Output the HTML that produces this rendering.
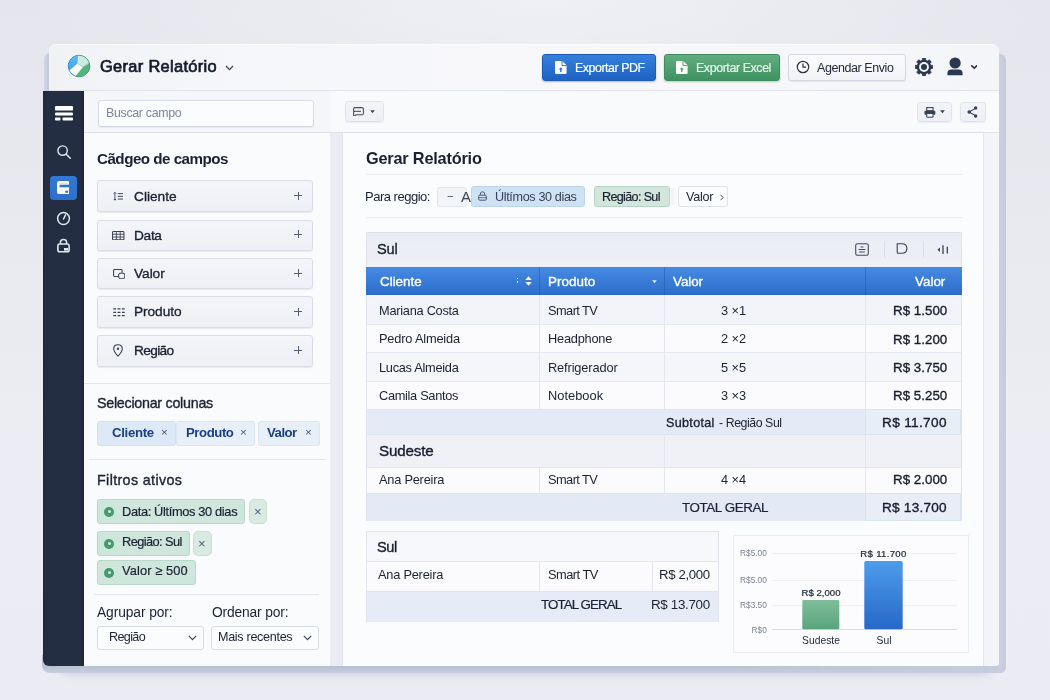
<!DOCTYPE html>
<html lang="pt-BR">
<head>
<meta charset="utf-8">
<title>Gerar Relatório</title>
<style>
*{box-sizing:border-box;margin:0;padding:0}
html,body{width:1050px;height:700px;overflow:hidden}
body{font-family:"Liberation Sans",sans-serif;color:#1b2233;background:radial-gradient(ellipse 520px 120px at 52% 0%,rgba(240,241,245,.9),rgba(240,241,245,0)),linear-gradient(180deg,#e5e6ed 0%,#e8e9ef 28%,#ecedf3 62%,#ebecf3 100%);position:relative}
.abs{position:absolute}
.t{position:absolute;white-space:nowrap;line-height:1;will-change:transform}
#shadow{left:60px;top:600px;width:930px;height:68px;background:#c7cddc;border-radius:8px;box-shadow:0 6px 9px rgba(150,160,195,.42)}
#shl{left:43.500px;top:52.500px;width:12px;height:45px;border-radius:6px 0 0 0;background:linear-gradient(90deg,#d3d8e4,#bcc4d6 6px)}
#shr{left:996px;top:53.500px;width:9.600px;height:619.700px;border-radius:0 6px 6px 0;background:linear-gradient(90deg,#c6ccdc 2px,#cbd0df 4px,#c5cbdb)}
#shb{left:41.500px;top:655px;width:960px;height:18.200px;border-radius:0 0 0 8px;background:linear-gradient(90deg,rgba(197,203,219,0) 70%,rgba(198,204,220,1) 99%),linear-gradient(180deg,#b7bfd4 11px,#c8cedd 18px)}
#hdr{left:49px;top:43.500px;width:950px;height:47.500px;background:linear-gradient(90deg,#f1f2f6 0,#f6f7fa 22%,#f8f8fb 55%,#f4f5f8 100%);border-radius:7px 8px 0 0;border-bottom:1px solid #dfe2ea;box-shadow:inset 0 1px 0 #fafbfd}
#side{left:43.300px;top:90.500px;width:40.500px;height:575.500px;background:linear-gradient(90deg,#1d283a,#232e42 3px,#232e42 37px,#1c2739);border-radius:0 0 0 6px}
#lp{left:83.500px;top:91px;width:247.500px;height:575px;background:#fafbfd;border-right:1px solid #eceef4}
#lptb{left:83.500px;top:91px;width:247.500px;height:42px;background:#f5f6fa;border-bottom:1px solid #dde0e8}
#main{left:331px;top:91px;width:668px;height:575px;border-radius:0 0 3px 0;background:linear-gradient(90deg,#e3e5ee 0,#ecedf4 1px,#ecedf4 10.5px,#e1e4ed 11.5px,#f3f4f8 653px,#f4f5f9 668px)}
#maintb{left:331px;top:91px;width:668px;height:42px;background:#f9fafc;border-bottom:1px solid #dde0e8}
#card{left:342.500px;top:133px;width:641.500px;height:533px;background:#fbfcfe;border-right:1px solid #e6e8ef}
.btn{position:absolute;border-radius:3px}
.field{position:absolute;left:96.500px;width:216.500px;height:32px;background:linear-gradient(180deg,#f4f5f9,#eef0f5);border:1px solid #dadde6;border-radius:3px;box-shadow:0 1px 1px rgba(120,130,160,.14)}
.pl{position:absolute;left:294px;width:8px;height:8px}
.pl:before{content:"";position:absolute;left:0;top:3.500px;width:8px;height:1.100px;background:#566074}
.pl:after{content:"";position:absolute;left:3.500px;top:0;width:1.100px;height:8px;background:#566074}
.hl{position:absolute;height:1px;background:#e3e6ed}
.chipb{position:absolute;height:25px;top:421px;background:#e8eff9;border:1px solid #dbe5f3;border-radius:3px}
.chipg{position:absolute;left:96.500px;height:25px;background:#cfe6dc;border:1px solid #b9d8ca;border-radius:3px}
.dot{position:absolute;width:10px;height:10px;border-radius:50%;background:#429b6a;margin:.3px 0 0 .3px}
.dot:after{content:"";position:absolute;left:3.300px;top:3.300px;width:3.400px;height:3.400px;border-radius:50%;background:#dff0e7}
.xb{position:absolute;width:18.500px;height:25px;background:#d8eae1;border:1px solid #c9dfd2;border-radius:5px}
.sel{position:absolute;top:625.500px;height:24.500px;background:#fbfcfe;border:1px solid #d9dce5;border-radius:3px}
.sbtn{position:absolute;top:101.500px;height:20.500px;background:linear-gradient(180deg,#f3f4f8,#eff0f5);border:1px solid #dfe2ea;border-radius:3.500px;box-shadow:0 1px 1px rgba(120,130,160,.10)}
.cell{position:absolute}
</style>
</head>
<body>
<div id="shadow" class="abs"></div>
<div id="shl" class="abs"></div>
<div id="shb" class="abs"></div>
<div id="shr" class="abs"></div>
<div id="hdr" class="abs"></div>
<div id="side" class="abs"></div>
<div id="lp" class="abs"></div>
<div id="lptb" class="abs"></div>
<div id="main" class="abs"></div>
<div id="maintb" class="abs"></div>
<div id="card" class="abs"></div>
<!-- header -->
<svg class="abs" style="left:66.800px;top:54px" width="24" height="24" viewBox="0 0 25 25">
<defs><linearGradient id="lgb" x1="0" y1="0" x2="0" y2="1"><stop offset="0" stop-color="#5cc0f8"/><stop offset="1" stop-color="#3f9fe6"/></linearGradient></defs>
<circle cx="12.5" cy="12.5" r="12.400" fill="#f8f9fc"/>
<path d="M12.11 1.31 L11.40 9.90 L2.46 17.46 A 11.2 11.2 0 0 1 12.11 1.31 Z" fill="url(#lgb)"/>
<path d="M12.11 1.31 A 11.2 11.2 0 0 1 23.27 9.41 L16.30 13.50 L11.40 9.90 Z" fill="#cdeae1"/>
<path d="M23.27 9.41 A 11.2 11.2 0 0 1 8.49 22.96 L16.30 13.50 Z" fill="#56b57f"/>
<path d="M8.49 22.96 A 11.2 11.2 0 0 1 2.46 17.46 L11.40 9.90 L16.30 13.50 Z" fill="#fcfefd"/>
<path d="M12.11 1.31 L11.40 9.90 L16.30 13.50 L23.27 9.41 M11.40 9.90 L2.46 17.46 M16.30 13.50 L8.49 22.96" fill="none" stroke="#f2fbf7" stroke-width="0.700" stroke-opacity=".9"/>
<path d="M11.40 9.90 L16.30 13.50 L23.27 9.41" fill="none" stroke="#3f9a78" stroke-width="0.600" stroke-opacity=".7"/>
<path d="M8.49 22.96 A 11.2 11.2 0 0 1 2.46 17.46 A 11.2 11.2 0 0 1 12.11 1.31" fill="none" stroke="#2f80cc" stroke-width="0.900"/>
<path d="M12.11 1.31 A 11.2 11.2 0 0 1 23.27 9.41 A 11.2 11.2 0 0 1 8.49 22.96" fill="none" stroke="#2f9467" stroke-width="0.900"/>
</svg>
<div class="t" style="left:100.0px;top:58.0px;font-size:16.4px;-webkit-text-stroke:.7px currentColor;color:#141b2d;letter-spacing:0.33px;">Gerar Relatório</div>
<svg class="abs" style="left:224.500px;top:64.500px" width="9" height="6" viewBox="0 0 9 6"><path d="M1 1 L4.500 4.600 L8 1" fill="none" stroke="#3b4356" stroke-width="1.300"/></svg>

<div class="btn" style="left:541.500px;top:53.500px;width:114.500px;height:27.500px;background:linear-gradient(180deg,#3580dc,#1f62c2);border:1px solid #1d5cb8;box-shadow:0 1px 2px rgba(40,70,130,.35)"></div>
<svg class="abs" style="left:555px;top:61px" width="12" height="13" viewBox="0 0 12 13"><path d="M1.200 0 H7.200 L11.600 4.200 V11.800 Q11.600 13 10.400 13 H1.200 Q0 13 0 11.800 V1.200 Q0 0 1.200 0 Z" fill="#fff"/><path d="M7 0 V4.600 H11.600" fill="none" stroke="#2a70cf" stroke-width="1"/><path d="M5.800 6.200 L7.800 8.600 H6.500 V11 H5.100 V8.600 H3.800 Z" fill="#2a70cf"/></svg>
<div class="t" style="left:575.3px;top:62.0px;font-size:12.4px;-webkit-text-stroke:.2px currentColor;color:#ffffff;letter-spacing:-0.45px;">Exportar PDF</div>

<div class="btn" style="left:663.500px;top:54px;width:116px;height:27px;background:linear-gradient(180deg,#62ad7f,#3f9262);border:1px solid #3d8d5e;box-shadow:0 1px 2px rgba(40,100,70,.3)"></div>
<svg class="abs" style="left:676px;top:61px" width="12" height="13" viewBox="0 0 12 13"><path d="M1.200 0 H7.200 L11.600 4.200 V11.800 Q11.600 13 10.400 13 H1.200 Q0 13 0 11.800 V1.200 Q0 0 1.200 0 Z" fill="#fff"/><path d="M7 0 V4.600 H11.600" fill="none" stroke="#4a9f6e" stroke-width="1"/><path d="M5.800 6.200 L7.800 8.600 H6.500 V11 H5.100 V8.600 H3.800 Z" fill="#4a9f6e"/></svg>
<div class="t" style="left:696.0px;top:62.0px;font-size:12.4px;-webkit-text-stroke:.2px currentColor;color:#e6f4ec;letter-spacing:-0.40px;">Exportar Excel</div>

<div class="btn" style="left:787.500px;top:54px;width:118px;height:26.500px;background:linear-gradient(180deg,#fbfbfd,#f2f3f7);border:1px solid #d5d8e1;box-shadow:0 1px 1px rgba(120,130,160,.15)"></div>
<svg class="abs" style="left:796px;top:60.400px" width="14" height="14" viewBox="0 0 14 14"><circle cx="7" cy="7" r="5.700" fill="none" stroke="#2a3245" stroke-width="1.200"/><path d="M7 3.600 V7.200 H10" fill="none" stroke="#2a3245" stroke-width="1.200"/></svg>
<div class="t" style="left:816.7px;top:62.0px;font-size:12.5px;color:#222a3c;letter-spacing:-0.43px;">Agendar Envio</div>

<svg class="abs" style="left:915.200px;top:57.600px" width="18" height="18" viewBox="0 0 18 18"><path d="M7.27 2.32 L7.53 0.22 L10.47 0.22 L10.73 2.32 L12.50 3.05 L14.17 1.75 L16.25 3.83 L14.95 5.50 L15.68 7.27 L17.78 7.53 L17.78 10.47 L15.68 10.73 L14.95 12.50 L16.25 14.17 L14.17 16.25 L12.50 14.95 L10.73 15.68 L10.47 17.78 L7.53 17.78 L7.27 15.68 L5.50 14.95 L3.83 16.25 L1.75 14.17 L3.05 12.50 L2.32 10.73 L0.22 10.47 L0.22 7.53 L2.32 7.27 L3.05 5.50 L1.75 3.83 L3.83 1.75 L5.50 3.05 Z" fill="#2b3650" stroke="#2b3650" stroke-width="0.800" stroke-linejoin="round"/><circle cx="9" cy="9" r="4.900" fill="#f4f5f9"/><circle cx="9" cy="9" r="3" fill="#2b3650"/></svg>
<svg class="abs" style="left:946.800px;top:57px" width="16" height="18.500" viewBox="0 0 16 18.500"><circle cx="8.100" cy="6" r="5.600" fill="#2b3650"/><path d="M0.400 18.200 V16.600 Q0.400 12.500 4.400 12.500 H11.600 Q15.600 12.500 15.600 16.600 V18.200 Z" fill="#2b3650"/></svg>
<svg class="abs" style="left:970.700px;top:65px" width="6.500" height="4.500" viewBox="0 0 7.200 5"><path d="M0.900 1 L3.600 3.600 L6.300 1" fill="none" stroke="#2b3650" stroke-width="1.900" stroke-linecap="round" stroke-linejoin="round"/></svg>
<!-- sidebar icons -->
<svg class="abs" style="left:54.500px;top:105.500px" width="18" height="15" viewBox="0 0 18 15"><rect x="0" y="0" width="18" height="4.600" rx="1.200" fill="#fff"/><rect x="0" y="6.600" width="18" height="3" rx="1" fill="#fff"/><rect x="0" y="11.600" width="5.500" height="3" rx="1" fill="#fff"/><rect x="7.500" y="11.600" width="10.500" height="3" rx="1" fill="#fff"/></svg>
<svg class="abs" style="left:55.500px;top:144px" width="16" height="16" viewBox="0 0 16 16"><circle cx="6.600" cy="6.600" r="4.700" fill="none" stroke="#dfe8f5" stroke-width="1.400"/><path d="M10.200 10.200 L14.300 14.300" stroke="#dfe8f5" stroke-width="1.500" stroke-linecap="round"/></svg>
<div class="abs" style="left:49.700px;top:176.300px;width:27.300px;height:23.600px;background:linear-gradient(180deg,#3279d4,#2d70cb);border-radius:4px"></div>
<svg class="abs" style="left:56.800px;top:180.800px" width="12.600" height="13.200" viewBox="0 0 12.600 13.200"><rect x="0" y="0" width="12.600" height="13.200" rx="2.300" fill="#fdfeff"/><rect x="2.600" y="3.700" width="10" height="2.600" fill="#2f74cf"/><rect x="2.200" y="2" width="8.200" height="0.900" fill="#c9dcf5"/><rect x="8.300" y="9.600" width="2.800" height="2.200" fill="#2f74cf"/><rect x="2.400" y="8.600" width="5" height="0.900" fill="#d5e4f7"/></svg>
<svg class="abs" style="left:55.500px;top:210.500px" width="15" height="15" viewBox="0 0 15 15"><circle cx="7.500" cy="7.500" r="5.900" fill="none" stroke="#dfe8f5" stroke-width="1.500"/><path d="M7.500 8 L9.600 3.800" stroke="#dfe8f5" stroke-width="1.500" stroke-linecap="round"/></svg>
<svg class="abs" style="left:56.500px;top:238px" width="13" height="15" viewBox="0 0 13 15"><path d="M3.400 6 V4.600 Q3.400 1.600 6.500 1.600 Q9.600 1.600 9.600 4.600 V6" fill="none" stroke="#dfe8f5" stroke-width="1.500"/><rect x="0.900" y="6" width="11.200" height="7.800" rx="1.800" fill="none" stroke="#dfe8f5" stroke-width="1.600"/><rect x="7" y="10" width="4" height="2.600" fill="#dfe8f5"/></svg>
<!-- left panel -->
<div class="abs" style="left:98px;top:99.500px;width:215.500px;height:27px;background:#fbfcfe;border:1px solid #d9dce6;border-radius:3px;box-shadow:0 1px 1px rgba(120,130,160,.10)"></div>
<div class="t" style="left:105.6px;top:107.0px;font-size:12.4px;color:#7f8798;letter-spacing:-0.32px;">Buscar campo</div>
<div class="t" style="left:97.0px;top:151.0px;font-size:15.2px;font-weight:bold;color:#182033;letter-spacing:-0.52px;">Cãdgeo de campos</div>

<div class="field" style="top:180.200px"></div>
<svg class="abs" style="left:113.300px;top:191.600px" width="11" height="9" viewBox="0 0 12 11"><path d="M1.600 0.500 V10 M0.200 2 L1.600 0.500 L3 2 M0.200 8.500 L1.600 10 L3 8.500" fill="none" stroke="#3a4255" stroke-width="1.100"/><path d="M5 2 H11.500 M5 5.300 H11.500 M5 8.600 H11.500" stroke="#3a4255" stroke-width="1.200"/></svg>
<div class="t" style="left:133.5px;top:190.0px;font-size:13.7px;-webkit-text-stroke:.35px currentColor;color:#1b2233;letter-spacing:0.01px;">Cliente</div>
<div class="pl" style="top:191.500px"></div>

<div class="field" style="top:219.500px;height:31.500px"></div>
<svg class="abs" style="left:112.300px;top:230.500px" width="12.500" height="9.300" viewBox="0 0 12 10" preserveAspectRatio="none"><rect x="0.500" y="0.500" width="11" height="9" rx="1" fill="none" stroke="#3a4255" stroke-width="1"/><path d="M0.500 3.500 H11.500 M0.500 6.500 H11.500 M4.200 0.500 V9.500 M7.900 0.500 V9.500" stroke="#3a4255" stroke-width="0.900"/></svg>
<div class="t" style="left:133.5px;top:229.0px;font-size:13.7px;-webkit-text-stroke:.35px currentColor;color:#1b2233;letter-spacing:-0.31px;">Data</div>
<div class="pl" style="top:230px"></div>

<div class="field" style="top:257.700px;height:31.600px"></div>
<svg class="abs" style="left:112.800px;top:268.800px" width="12.600" height="10.600" viewBox="0 0 13 12" preserveAspectRatio="none"><path d="M6 8.500 H1.600 Q0.600 8.500 0.600 7.500 V1.600 Q0.600 0.600 1.600 0.600 H8.400 Q9.400 0.600 9.400 1.600 V4" fill="none" stroke="#3a4255" stroke-width="1.100"/><circle cx="9" cy="7.800" r="3.300" fill="none" stroke="#3a4255" stroke-width="1.100"/></svg>
<div class="t" style="left:133.5px;top:267.0px;font-size:13.7px;-webkit-text-stroke:.35px currentColor;color:#1b2233;letter-spacing:-0.05px;">Valor</div>
<div class="pl" style="top:269px"></div>

<div class="field" style="top:296.300px;height:31.400px"></div>
<svg class="abs" style="left:112.500px;top:308px" width="12" height="8.600" viewBox="0 0 12 9"><path d="M0 1 H3 M4.500 1 H7.500 M9 1 H12 M0 4.500 H3 M4.500 4.500 H7.500 M9 4.500 H12 M0 8 H3 M4.500 8 H7.500 M9 8 H12" stroke="#3a4255" stroke-width="1.300"/></svg>
<div class="t" style="left:133.5px;top:305.0px;font-size:13.7px;-webkit-text-stroke:.35px currentColor;color:#1b2233;letter-spacing:-0.06px;">Produto</div>
<div class="pl" style="top:307.500px"></div>

<div class="field" style="top:334.800px;height:32px"></div>
<svg class="abs" style="left:113px;top:344px" width="10" height="13" viewBox="0 0 10 13"><path d="M5 12.200 Q0.700 7.600 0.700 4.800 Q0.700 0.700 5 0.700 Q9.300 0.700 9.300 4.800 Q9.300 7.600 5 12.200 Z" fill="none" stroke="#3a4255" stroke-width="1.100"/><circle cx="5" cy="4.800" r="1.200" fill="#3a4255"/></svg>
<div class="t" style="left:133.5px;top:344.0px;font-size:13.7px;-webkit-text-stroke:.35px currentColor;color:#1b2233;letter-spacing:-0.66px;">Região</div>
<div class="pl" style="top:346px"></div>

<div class="hl" style="left:84px;top:382.500px;width:246px"></div>
<div class="t" style="left:96.6px;top:396.0px;font-size:14.3px;-webkit-text-stroke:.35px currentColor;color:#1b2233;letter-spacing:-0.27px;">Selecionar colunas</div>
<div class="chipb" style="left:96.500px;width:79.500px;background:#dde9f7;border-color:#d3e0f1"></div>
<div class="chipb" style="left:175.500px;width:79px"></div>
<div class="chipb" style="left:258px;width:61.500px"></div>
<div class="t" style="left:111.6px;top:426.0px;font-size:13.2px;font-weight:bold;color:#1a3f86;letter-spacing:-0.32px;">Cliente</div>
<div class="t" style="left:186.0px;top:426.0px;font-size:13.2px;font-weight:bold;color:#1a3f86;letter-spacing:-0.44px;">Produto</div>
<div class="t" style="left:267.1px;top:426.0px;font-size:13.2px;font-weight:bold;color:#1a3f86;letter-spacing:-0.51px;">Valor</div>
<div class="t" style="left:161.1px;top:427.0px;font-size:11.5px;color:#3f5588;">×</div>
<div class="t" style="left:240.0px;top:427.0px;font-size:11.5px;color:#3f5588;">×</div>
<div class="t" style="left:305.1px;top:427.0px;font-size:11.5px;color:#3f5588;">×</div>

<div class="hl" style="left:88.500px;top:459px;width:236px"></div>
<div class="t" style="left:96.6px;top:473.0px;font-size:14.3px;-webkit-text-stroke:.35px currentColor;color:#1b2233;letter-spacing:0.36px;">Filtros ativos</div>

<div class="chipg" style="top:499px;width:148.500px"></div>
<div class="dot" style="left:104px;top:506.400px"></div>
<div class="t" style="left:121.8px;top:506.0px;font-size:12.8px;-webkit-text-stroke:.2px currentColor;color:#1b2233;letter-spacing:-0.34px;">Data: Últímos 30 dias</div>
<div class="xb" style="left:248.500px;top:499px"></div>
<div class="t" style="left:253.9px;top:505.0px;font-size:13px;color:#4d5b85;">×</div>

<div class="chipg" style="top:531px;width:93.500px"></div>
<div class="dot" style="left:104px;top:538.400px"></div>
<div class="t" style="left:121.8px;top:536.0px;font-size:12.8px;-webkit-text-stroke:.2px currentColor;color:#1b2233;letter-spacing:-0.58px;">Região: Sul</div>
<div class="xb" style="left:193px;top:531px"></div>
<div class="t" style="left:198.4px;top:537.0px;font-size:13px;color:#4d5b85;">×</div>

<div class="chipg" style="top:560px;width:98.500px;left:97px"></div>
<div class="dot" style="left:104px;top:567.300px"></div>
<div class="t" style="left:121.5px;top:565.0px;font-size:12.8px;-webkit-text-stroke:.2px currentColor;color:#1b2233;letter-spacing:0.13px;">Valor ≥ 500</div>

<div class="hl" style="left:93.500px;top:593.500px;width:225px"></div>
<div class="t" style="left:97.0px;top:606.0px;font-size:13.8px;color:#1b2233;letter-spacing:-0.09px;">Agrupar por:</div>
<div class="t" style="left:212.2px;top:606.0px;font-size:13.8px;color:#1b2233;letter-spacing:-0.15px;">Ordenar por:</div>
<div class="sel" style="left:97px;width:106.500px"></div>
<div class="t" style="left:109.1px;top:631.0px;font-size:12.6px;color:#1b2233;letter-spacing:-0.65px;">Região</div>
<svg class="abs" style="left:187.500px;top:634.500px" width="9" height="6" viewBox="0 0 9 6"><path d="M0.800 0.800 L4.500 4.600 L8.200 0.800" fill="none" stroke="#3b4356" stroke-width="1.100"/></svg>
<div class="sel" style="left:210.500px;width:108.500px"></div>
<div class="t" style="left:218.4px;top:631.0px;font-size:12.6px;color:#1b2233;letter-spacing:-0.31px;">Mais recentes</div>
<svg class="abs" style="left:303px;top:634.500px" width="9" height="6" viewBox="0 0 9 6"><path d="M0.800 0.800 L4.500 4.600 L8.200 0.800" fill="none" stroke="#3b4356" stroke-width="1.100"/></svg>
<!-- main toolbar -->
<div class="sbtn" style="left:345px;top:101px;width:38.500px;height:21px"></div>
<svg class="abs" style="left:353.300px;top:106.800px" width="11" height="9.500" viewBox="0 0 11 9.500"><path d="M2 0.600 H9 Q10.400 0.600 10.400 2 V6.400 Q10.400 7.800 9 7.800 H3 L1.400 8.900 Q0.600 9.200 0.600 8.200 V2 Q0.600 0.600 2 0.600 Z" fill="none" stroke="#414a5e" stroke-width="1.050"/><path d="M1 4.300 H8" stroke="#414a5e" stroke-width="1.050"/></svg>
<svg class="abs" style="left:370.300px;top:109.500px" width="5" height="3.300" viewBox="0 0 6 4"><path d="M0.200 0.300 L3 3.800 L5.800 0.300 Z" fill="#3a4255"/></svg>

<div class="sbtn" style="left:916.500px;width:35px"></div>
<svg class="abs" style="left:923.800px;top:106.800px" width="11.800" height="11" viewBox="0 0 13 12"><rect x="3" y="0.600" width="7" height="3.400" fill="#f6f7fa" stroke="#36415a" stroke-width="1.200"/><rect x="0.500" y="4" width="12" height="4.600" rx="1.200" fill="#36415a"/><rect x="3" y="7" width="7" height="4.200" rx="0.800" fill="#f4f5f9" stroke="#36415a" stroke-width="1.200"/></svg>
<svg class="abs" style="left:940px;top:110.300px" width="5" height="3.300" viewBox="0 0 6 4"><path d="M0.200 0.300 L3 3.800 L5.800 0.300 Z" fill="#36415a"/></svg>
<div class="sbtn" style="left:959.500px;width:26px"></div>
<svg class="abs" style="left:967px;top:106px" width="11" height="12" viewBox="0 0 11 12"><path d="M8.600 2.100 L2.200 6 L8.600 9.900" fill="none" stroke="#36415a" stroke-width="1.100"/><circle cx="8.600" cy="2.100" r="1.750" fill="#36415a"/><circle cx="2.200" cy="6" r="1.750" fill="#36415a"/><circle cx="8.600" cy="9.900" r="1.750" fill="#36415a"/></svg>

<!-- main content -->
<div class="t" style="left:366.0px;top:150.0px;font-size:16.3px;font-weight:bold;color:#182033;letter-spacing:-0.19px;">Gerar Relatório</div>
<div class="hl" style="left:366px;top:174px;width:597px;background:#eceef3"></div>
<div class="t" style="left:365.1px;top:190.0px;font-size:13px;color:#1b2233;letter-spacing:-0.49px;">Para reggio:</div>
<div class="abs" style="left:436.500px;top:186.500px;width:30.500px;height:20.500px;background:#f3f4f8;border:1px solid #e3e5ec;border-radius:3px"></div>
<div class="t" style="left:446.8px;top:191.0px;font-size:11px;color:#3a4255;">−</div>
<div class="t" style="left:461.3px;top:189.0px;font-size:15px;color:#394257;letter-spacing:-1.02px;">A</div>
<div class="abs" style="left:471px;top:186px;width:114px;height:21px;background:#cfe2f4;border:1px solid #bcd5ec;border-radius:3px"></div>
<svg class="abs" style="left:477.500px;top:191px" width="9" height="10" viewBox="0 0 9 10"><path d="M2.300 4.200 V3.200 Q2.300 0.800 4.500 0.800 Q6.700 0.800 6.700 3.200 V4.200" fill="none" stroke="#4a5a74" stroke-width="1"/><rect x="0.700" y="4.200" width="7.600" height="5" rx="1" fill="none" stroke="#4a5a74" stroke-width="1"/><path d="M0.700 6.700 H8.300" stroke="#4a5a74" stroke-width="0.800"/></svg>
<div class="t" style="left:495.4px;top:191.0px;font-size:12.6px;color:#34415c;letter-spacing:-0.35px;">Últímos 30 dias</div>
<div class="abs" style="left:594px;top:186px;width:76px;height:21px;background:#d2e6dc;border:1px solid #b6d3c5;border-radius:3px"></div>
<div class="abs" style="left:670.500px;top:188px;width:6px;height:17px;background:linear-gradient(90deg,#eef1f6,#fafbfd)"></div>
<div class="t" style="left:602.2px;top:191.0px;font-size:12.6px;-webkit-text-stroke:.2px currentColor;color:#1b2233;letter-spacing:-0.66px;">Região: Sul</div>
<div class="abs" style="left:678px;top:186px;width:50px;height:21px;background:#fbfcfe;border:1px solid #dfe2ea;border-radius:3px"></div>
<div class="t" style="left:686.2px;top:191.0px;font-size:12.6px;color:#1b2233;letter-spacing:-0.27px;">Valor</div>
<svg class="abs" style="left:719.500px;top:193.500px" width="4" height="7" viewBox="0 0 4 7"><path d="M0.700 0.800 L3.200 3.500 L0.700 6.200" fill="none" stroke="#4b5365" stroke-width="1"/></svg>
<div class="hl" style="left:366px;top:217px;width:597px;background:#eceef3"></div>
<!-- table 1 -->
<div class="abs" style="left:366px;top:231.500px;width:595.500px;height:289.500px;background:#fbfbfd;border:1px solid #e1e4ec"></div>
<div class="abs" style="left:366px;top:231.500px;width:595.500px;height:35.500px;background:linear-gradient(180deg,#eaecf5,#eff0f6);border:1px solid #e0e3ec;border-bottom:none"></div>
<div class="t" style="left:377.1px;top:242.0px;font-size:14.6px;-webkit-text-stroke:.35px currentColor;color:#161d2e;letter-spacing:-0.23px;">Sul</div>
<!-- header icons -->
<svg class="abs" style="left:855px;top:242.500px" width="14" height="13" viewBox="0 0 14 13"><rect x="0.700" y="0.700" width="12.600" height="11.600" rx="1.800" fill="none" stroke="#414a5e" stroke-width="1.100"/><path d="M5.600 4 H8.400 M3.600 6.500 H10.400 M4.200 9 H9.800" stroke="#414a5e" stroke-width="1.100"/></svg>
<div class="abs" style="left:884px;top:241px;width:1px;height:17px;background:#dcdfe8"></div>
<svg class="abs" style="left:895.500px;top:243.300px" width="12" height="11.200" viewBox="0 0 12 12" preserveAspectRatio="none"><path d="M1.200 0.900 H5.800 Q10.900 0.900 10.900 6 Q10.900 11.100 5.800 11.100 H2.200 Q1.200 11.100 1.200 10.100 Z" fill="none" stroke="#3a4255" stroke-width="1.100"/></svg>
<div class="abs" style="left:923px;top:241px;width:1px;height:17px;background:#dcdfe8"></div>
<svg class="abs" style="left:936.500px;top:244px" width="12" height="11" viewBox="0 0 12 11"><path d="M3 3.400 L0.500 5.700 L3 8 Z" fill="#3a4255"/><path d="M6 1.200 V10" stroke="#3a4255" stroke-width="1.300"/><path d="M10.300 2.800 V9.600" stroke="#3a4255" stroke-width="1.300"/></svg>
<!-- blue header -->
<div class="abs" style="left:366px;top:266.800px;width:595.500px;height:27.800px;background:linear-gradient(180deg,#478ae1 0%,#397cd8 50%,#2c6dca 100%)"></div>
<div class="abs" style="left:538.500px;top:267px;width:1px;height:28px;background:rgba(20,60,140,.30)"></div>
<div class="abs" style="left:663.500px;top:267px;width:1px;height:28px;background:rgba(20,60,140,.30)"></div>
<div class="abs" style="left:864.500px;top:267px;width:1px;height:28px;background:rgba(20,60,140,.30)"></div>
<div class="t" style="left:379.8px;top:275.0px;font-size:13.4px;-webkit-text-stroke:.35px currentColor;color:#ffffff;letter-spacing:-0.01px;">Cliente</div>
<div class="abs" style="left:517px;top:277.500px;width:1.300px;height:1.500px;background:#dbe8fa"></div><div class="abs" style="left:517px;top:281px;width:1.300px;height:1.500px;background:#dbe8fa"></div>
<svg class="abs" style="left:525px;top:276px" width="7" height="10" viewBox="0 0 7 10"><path d="M3.500 0.300 L6.700 4 H0.300 Z M3.500 9.700 L6.700 6 H0.300 Z" fill="#fff"/></svg>
<div class="t" style="left:548.4px;top:275.0px;font-size:13.4px;-webkit-text-stroke:.35px currentColor;color:#ffffff;letter-spacing:0.04px;">Produto</div>
<svg class="abs" style="left:652px;top:280px" width="5" height="3.500" viewBox="0 0 5 3.500"><path d="M0.200 0.300 L2.500 3.200 L4.800 0.300 Z" fill="#e8f0fc"/></svg>
<div class="t" style="left:672.5px;top:275.0px;font-size:13.4px;-webkit-text-stroke:.35px currentColor;color:#ffffff;letter-spacing:-0.05px;">Valor</div>
<div class="t" style="left:915.0px;top:275.0px;font-size:13.4px;-webkit-text-stroke:.35px currentColor;color:#ffffff;letter-spacing:0.01px;">Valor</div>
<!-- rows -->
<div class="abs" style="left:367px;top:294.500px;width:593.500px;height:29.500px;background:#f3f4f9"></div>
<div class="abs" style="left:367px;top:323.500px;width:593.500px;height:29.500px;background:#fbfbfd;border-top:1px solid #e6e8f0;border-bottom:1px solid #e6e8f0"></div>
<div class="abs" style="left:367px;top:353px;width:593.500px;height:28px;background:#f5f6fa"></div>
<div class="abs" style="left:367px;top:380.500px;width:593.500px;height:28.500px;background:#fbfbfd;border-top:1px solid #e6e8f0"></div>
<div class="abs" style="left:367px;top:408.500px;width:593.500px;height:26px;background:#e4ebf7;border-top:1px solid #dde4f1;border-bottom:1px solid #dde4f1"></div>
<div class="abs" style="left:865px;top:408.500px;width:95.500px;height:26px;background:#e8eef8;border:1px solid #dbe2f0"></div>
<div class="abs" style="left:367px;top:434.500px;width:593.500px;height:32.500px;background:#f0f1f6"></div>
<div class="abs" style="left:367px;top:467px;width:593.500px;height:26px;background:#fbfbfd;border-top:1px solid #e6e8f0"></div>
<div class="abs" style="left:367px;top:492.500px;width:593.500px;height:28.500px;background:#e3eaf6;border-top:1px solid #dde4f1"></div>
<div class="abs" style="left:865px;top:492.500px;width:95.500px;height:28.500px;background:#e8edf7;border:1px solid #dbe2f0"></div>
<!-- col separators -->
<div class="abs" style="left:538.500px;top:294.500px;width:1px;height:114px;background:#e4e6ee"></div>
<div class="abs" style="left:663.500px;top:294.500px;width:1px;height:114px;background:#e4e6ee"></div>
<div class="abs" style="left:864.500px;top:294.500px;width:1px;height:114px;background:#e4e6ee"></div>
<div class="abs" style="left:663.500px;top:434.500px;width:1px;height:58.500px;background:#e4e6ee"></div>
<div class="abs" style="left:864.500px;top:434.500px;width:1px;height:58.500px;background:#e4e6ee"></div>
<div class="abs" style="left:538.500px;top:467px;width:1px;height:26px;background:#e4e6ee"></div>

<div class="t" style="left:379.2px;top:305.0px;font-size:12.8px;color:#1b2233;letter-spacing:-0.27px;">Mariana Costa</div>
<div class="t" style="left:548.4px;top:305.0px;font-size:12.8px;color:#1b2233;letter-spacing:-0.56px;">Smart TV</div>
<div class="t" style="left:721.0px;top:305.0px;font-size:12.8px;color:#1b2233;letter-spacing:-0.07px;">3 ×1</div>
<div class="t" style="left:892.7px;top:304.0px;font-size:13.3px;-webkit-text-stroke:.35px currentColor;color:#161d2e;letter-spacing:0.04px;">R$ 1.500</div>

<div class="t" style="left:378.5px;top:333.0px;font-size:12.8px;color:#1b2233;letter-spacing:-0.18px;">Pedro Almeida</div>
<div class="t" style="left:548.4px;top:333.0px;font-size:12.8px;color:#1b2233;letter-spacing:-0.23px;">Headphone</div>
<div class="t" style="left:721.0px;top:333.0px;font-size:12.8px;color:#1b2233;letter-spacing:-0.07px;">2 ×2</div>
<div class="t" style="left:892.7px;top:333.0px;font-size:13.3px;-webkit-text-stroke:.35px currentColor;color:#161d2e;letter-spacing:0.04px;">R$ 1.200</div>

<div class="t" style="left:378.5px;top:362.0px;font-size:12.8px;color:#1b2233;letter-spacing:-0.29px;">Lucas Almeida</div>
<div class="t" style="left:548.4px;top:362.0px;font-size:12.8px;color:#1b2233;letter-spacing:-0.13px;">Refrigerador</div>
<div class="t" style="left:721.0px;top:362.0px;font-size:12.8px;color:#1b2233;letter-spacing:-0.07px;">5 ×5</div>
<div class="t" style="left:892.7px;top:361.0px;font-size:13.3px;-webkit-text-stroke:.35px currentColor;color:#161d2e;letter-spacing:0.04px;">R$ 3.750</div>

<div class="t" style="left:378.5px;top:390.0px;font-size:12.8px;color:#1b2233;letter-spacing:-0.32px;">Camila Santos</div>
<div class="t" style="left:548.4px;top:390.0px;font-size:12.8px;color:#1b2233;letter-spacing:0.04px;">Notebook</div>
<div class="t" style="left:721.0px;top:390.0px;font-size:12.8px;color:#1b2233;letter-spacing:-0.07px;">3 ×3</div>
<div class="t" style="left:892.7px;top:389.0px;font-size:13.3px;-webkit-text-stroke:.35px currentColor;color:#161d2e;letter-spacing:0.04px;">R$ 5.250</div>

<div class="t" style="left:666.0px;top:417.0px;font-size:12.6px;-webkit-text-stroke:.35px currentColor;color:#1b2233;letter-spacing:0.31px;">Subtotal</div>
<div class="t" style="left:718.7px;top:417.0px;font-size:12.3px;color:#1b2233;letter-spacing:-0.42px;">- Região Sul</div>
<div class="t" style="left:882.2px;top:416.0px;font-size:13.6px;-webkit-text-stroke:.35px currentColor;color:#161d2e;letter-spacing:0.34px;">R$ 11.700</div>

<div class="t" style="left:378.5px;top:443.0px;font-size:15.2px;-webkit-text-stroke:.35px currentColor;color:#161d2e;letter-spacing:-0.18px;">Sudeste</div>

<div class="t" style="left:378.5px;top:474.0px;font-size:12.8px;color:#1b2233;letter-spacing:-0.23px;">Ana Pereira</div>
<div class="t" style="left:548.4px;top:474.0px;font-size:12.8px;color:#1b2233;letter-spacing:-0.56px;">Smart TV</div>
<div class="t" style="left:721.0px;top:474.0px;font-size:12.8px;color:#1b2233;letter-spacing:-0.07px;">4 ×4</div>
<div class="t" style="left:892.7px;top:473.0px;font-size:13.3px;-webkit-text-stroke:.35px currentColor;color:#161d2e;letter-spacing:0.04px;">R$ 2.000</div>

<div class="t" style="left:682.1px;top:501.0px;font-size:13.4px;-webkit-text-stroke:.2px currentColor;color:#1b2233;letter-spacing:-0.40px;">TOTAL GERAL</div>
<div class="t" style="left:882.2px;top:501.0px;font-size:13.6px;-webkit-text-stroke:.35px currentColor;color:#161d2e;letter-spacing:0.23px;">R$ 13.700</div>
<!-- table 2 -->
<div class="abs" style="left:366px;top:530.500px;width:353px;height:91.500px;background:#fbfbfd;border:1px solid #e1e4ec"></div>
<div class="abs" style="left:367px;top:531.500px;width:351px;height:30px;background:#f7f8fb;border-bottom:1px solid #e4e6ee"></div>
<div class="abs" style="left:367px;top:591px;width:351px;height:30.500px;background:#e6ecf7;border-top:1px solid #dde4f1"></div>
<div class="abs" style="left:539px;top:562px;width:1px;height:29px;background:#e4e6ee"></div>
<div class="abs" style="left:651.500px;top:562px;width:1px;height:29px;background:#e4e6ee"></div>
<div class="t" style="left:377.4px;top:540.0px;font-size:14.6px;-webkit-text-stroke:.35px currentColor;color:#161d2e;letter-spacing:-0.40px;">Sul</div>
<div class="t" style="left:378.1px;top:569.0px;font-size:12.8px;color:#1b2233;letter-spacing:-0.23px;">Ana Pereira</div>
<div class="t" style="left:548.2px;top:569.0px;font-size:12.8px;color:#1b2233;letter-spacing:-0.49px;">Smart TV</div>
<div class="t" style="left:658.6px;top:568.0px;font-size:13.2px;color:#1b2233;letter-spacing:-0.35px;">R$ 2,000</div>
<div class="t" style="left:541.0px;top:598.0px;font-size:13.4px;-webkit-text-stroke:.2px currentColor;color:#1b2233;letter-spacing:-0.93px;">TOTAL GERAL</div>
<div class="t" style="left:650.6px;top:598.0px;font-size:13.4px;color:#1b2233;letter-spacing:-0.34px;">R$ 13.700</div>
<!-- chart -->
<div class="abs" style="left:732.500px;top:535px;width:236px;height:117.500px;background:#fcfcfe;border:1px solid #eaecf2"></div>
<svg class="abs" style="left:732px;top:535px;will-change:transform" width="237" height="118" viewBox="0 0 237 118">
<defs>
<linearGradient id="gb" x1="0" y1="0" x2="0" y2="1"><stop offset="0" stop-color="#4d9ceb"/><stop offset="1" stop-color="#2768c8"/></linearGradient>
<linearGradient id="gg" x1="0" y1="0" x2="0" y2="1"><stop offset="0" stop-color="#7fbd9b"/><stop offset="1" stop-color="#58a57c"/></linearGradient>
</defs>
<path d="M40 18.500 H225 M40 45.500 H225 M40 70.500 H225" stroke="#eff0f4" stroke-width="1"/>
<path d="M40 94.500 H225" stroke="#d9dce4" stroke-width="1"/>
<rect x="70.300" y="65" width="37" height="29.300" rx="1" fill="url(#gg)"/>
<rect x="132.300" y="26" width="38.400" height="68.300" rx="1.500" fill="url(#gb)"/>
<g font-family="'Liberation Sans',sans-serif" font-size="8.300" fill="#7b8190" text-anchor="end">
<text x="34.800" y="21">R$5.00</text>
<text x="34.800" y="48">R$5.00</text>
<text x="34.800" y="73">R$3.50</text>
<text x="34.800" y="97.500">R$0</text>
</g>
<g font-family="'Liberation Sans',sans-serif" font-size="9.600" fill="#222a3c" text-anchor="middle" stroke="#222a3c" stroke-width="0.220">
<text x="89" y="60.800">R$ 2,000</text>
<text x="151.500" y="21.800" letter-spacing="0.300">R$ 11.700</text>
</g>
<g font-family="'Liberation Sans',sans-serif" font-size="10.300" fill="#222a3c" text-anchor="middle">
<text x="89" y="109.200">Sudeste</text>
<text x="152" y="109.200">Sul</text>
</g>
</svg>
</body>
</html>
